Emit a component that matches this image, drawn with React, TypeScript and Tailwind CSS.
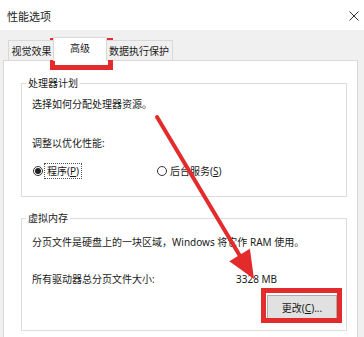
import React from "react";

function Radio({ checked }: { checked?: boolean }) {
  return (
    <span className="flex h-[10px] w-[10px] items-center justify-center rounded-full border border-[#333]">
      {checked && <span className="h-[6px] w-[6px] rounded-full bg-[#222]" />}
    </span>
  );
}

export default function App() {
  return (
    <div className="relative h-[337px] w-[364px] overflow-hidden bg-[#f0f0f0] font-['Noto_Sans','Noto_Sans_CJK_SC',sans-serif] text-[10px] leading-[14px] text-[#1a1a1a]">
      {/* title bar */}
      <div className="flex h-[30px] items-center justify-between bg-white pl-[7px] pr-[5px]">
        <span className="pt-[3px] text-[11px]">性能选项</span>
        <svg width="10" height="10" viewBox="0 0 10 10" className="mt-[2px]">
          <path d="M0.5 0.5 L9.5 9.5 M9.5 0.5 L0.5 9.5" stroke="#333" strokeWidth="1" />
        </svg>
      </div>

      {/* tabs */}
      <div className="relative z-10 -mb-px flex h-[31px] items-end pl-[8px]">
        <div className="mb-px flex h-[20px] w-[47px] items-center justify-center border border-b-0 border-[#d9d9d9] bg-[#f0f0f0]">
          视觉效果
        </div>
        <div className="relative z-10 -ml-[2px] flex h-[24px] w-[54px] items-start justify-center border border-b-0 border-[#d9d9d9] bg-white pt-[3px]">
          高级
        </div>
        <div className="mb-px -ml-[2px] flex h-[20px] w-[68px] items-center justify-center border border-b-0 border-[#d9d9d9] bg-[#f0f0f0]">
          数据执行保护
        </div>
      </div>

      {/* panel */}
      <div className="ml-[3px] mr-[6px] h-[300px] border border-[#d9d9d9] bg-white pl-[17px] pr-[10px] pt-[15px]">
        <fieldset className="border border-[#dcdcdc] px-[10px] pb-[17px]">
          <legend className="-ml-[6px] px-[2px]">处理器计划</legend>
          <div className="mt-[7px]">选择如何分配处理器资源。</div>
          <div className="mt-[25px]">调整以优化性能:</div>
          <div className="mt-[13px] grid grid-cols-[125px_1fr] items-center">
            <div className="flex items-center">
              <span className="ml-px">
                <Radio checked />
              </span>
              <span className="ml-px border border-dotted border-[#555] px-[2px]">
                程序(<span className="underline">P</span>)
              </span>
            </div>
            <div className="flex items-center">
              <Radio />
              <span className="ml-[3px]">
                后台服务(<span className="underline">S</span>)
              </span>
            </div>
          </div>
        </fieldset>

        <fieldset className="mt-[14px] flex flex-col border border-[#dcdcdc] px-[10px] pb-[10px]">
          <legend className="-ml-[6px] px-[2px]">虚拟内存</legend>
          <div className="mt-[10px] whitespace-nowrap">
            分页文件是硬盘上的一块区域，Windows 将它作 RAM 使用。
          </div>
          <div className="mt-[23px] flex">
            <span className="w-[204px]">所有驱动器总分页文件大小:</span>
            <span>3328 MB</span>
          </div>
          <div className="mt-[9px] flex justify-end">
            <button className="-mr-px flex h-[25px] w-[70px] items-center justify-center border border-[#adadad] bg-[#e1e1e1]">
              更改(<span className="underline">C</span>)...
            </button>
          </div>
        </fieldset>
      </div>

      {/* annotations */}
      <div className="pointer-events-none absolute left-[50px] top-[38px] h-[32px] w-[63px] border-[5px] border-[#e42b2b]" />
      <div className="pointer-events-none absolute left-[261px] top-[288px] h-[35px] w-[81px] border-[5px] border-[#e42b2b]" />
      <svg className="pointer-events-none absolute left-0 top-0" width="364" height="337" viewBox="0 0 364 337">
        <line x1="157" y1="117" x2="240" y2="256" stroke="#e42b2b" strokeWidth="4" strokeLinecap="round" />
        <polygon points="254,279 249.9,248.8 229.3,261.2" fill="#e42b2b" />
      </svg>
    </div>
  );
}
